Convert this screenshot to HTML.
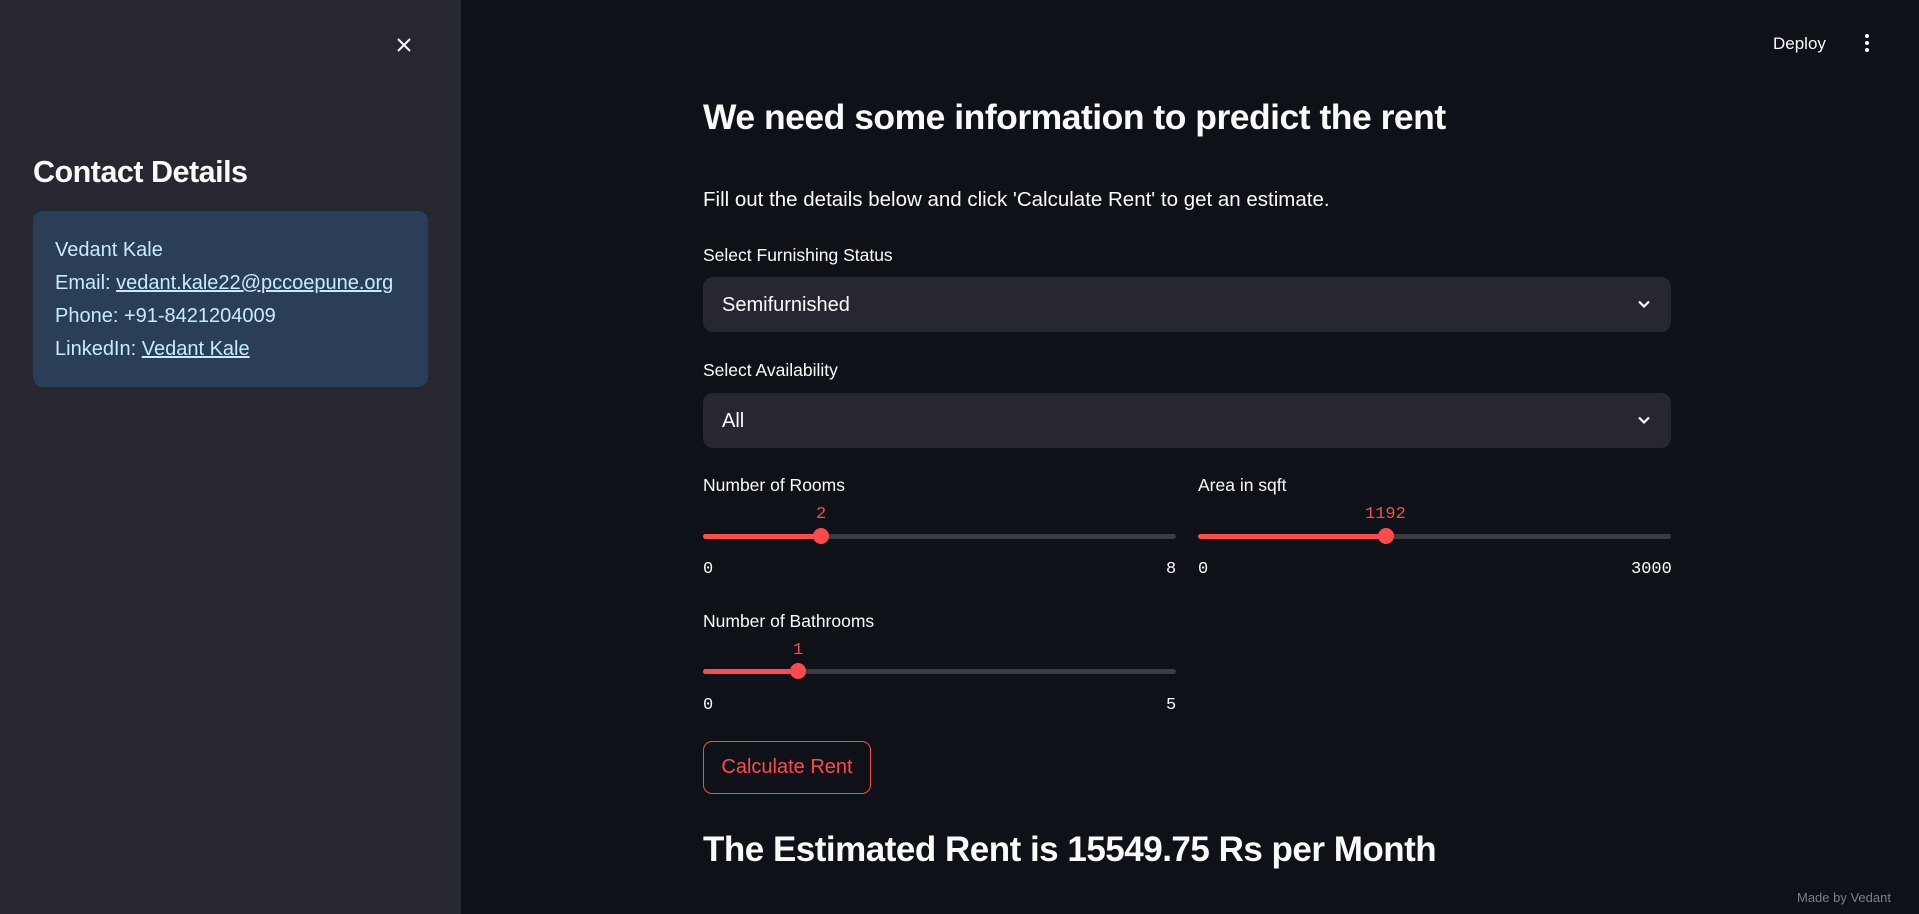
<!DOCTYPE html>
<html><head><meta charset="utf-8"><style>
*{box-sizing:border-box;margin:0;padding:0}
body{width:1919px;height:914px;background:#0e1117;font-family:"Liberation Sans",sans-serif;color:#fafafa;position:relative;overflow:hidden}
.a{position:absolute;white-space:nowrap}
.side{left:0;top:0;width:461px;height:914px;background:#262730}
.card{left:33px;top:211px;width:395px;height:176px;background:#2a3f57;border-radius:10px}
.ct{left:55px;font-size:20px;color:#c7ebff;line-height:1}
.ct u{text-decoration:underline}
.lbl{font-size:17.5px;color:#fafafa;line-height:1}
.sel{left:703px;width:968px;height:55px;background:#262730;border-radius:10px}
.sel span{position:absolute;left:19px;top:17px;font-size:20px}
.sel svg{position:absolute;right:20px;top:20px}
.track{height:5px;background:#3a3b44;border-radius:3px}
.fill{height:5px;background:#ff4b4b;border-radius:3px}
.th{width:16px;height:16px;border-radius:50%;background:#ff4b4b}
.mono{font-family:"Liberation Mono",monospace;font-size:17px;line-height:1}
.val{color:#ff4b4b}
</style></head><body>
<div class="a side"></div>
<svg class="a" style="left:396px;top:37px" width="16" height="16" viewBox="0 0 16 16"><path d="M2 2L14 14M14 2L2 14" stroke="#fafafa" stroke-width="2"/></svg>
<div class="a" style="left:33px;top:155px;font-size:30.5px;font-weight:bold;letter-spacing:-0.5px">Contact Details</div>
<div class="a card"></div>
<div class="a ct" style="top:240px">Vedant Kale</div>
<div class="a ct" style="top:273px">Email: <u>vedant.kale22@pccoepune.org</u></div>
<div class="a ct" style="top:306px">Phone: +91-8421204009</div>
<div class="a ct" style="top:339px">LinkedIn: <u>Vedant Kale</u></div>

<div class="a" style="left:1773px;top:34px;font-size:17px">Deploy</div>
<svg class="a" style="left:1863px;top:33px" width="8" height="20"><circle cx="4" cy="3" r="2" fill="#fafafa"/><circle cx="4" cy="10" r="2" fill="#fafafa"/><circle cx="4" cy="17" r="2" fill="#fafafa"/></svg>

<div class="a" style="left:703px;top:97px;font-size:35.5px;font-weight:bold;letter-spacing:-0.5px">We need some information to predict the rent</div>
<div class="a" style="left:703px;top:188px;font-size:20.5px">Fill out the details below and click 'Calculate Rent' to get an estimate.</div>

<div class="a lbl" style="left:703px;top:247px">Select Furnishing Status</div>
<div class="a sel" style="top:277px"><span>Semifurnished</span><svg width="14" height="14" viewBox="0 0 14 14"><path d="M2 4.5L7 9.5L12 4.5" stroke="#fafafa" stroke-width="2.2" fill="none"/></svg></div>
<div class="a lbl" style="left:703px;top:362px">Select Availability</div>
<div class="a sel" style="top:393px"><span>All</span><svg width="14" height="14" viewBox="0 0 14 14"><path d="M2 4.5L7 9.5L12 4.5" stroke="#fafafa" stroke-width="2.2" fill="none"/></svg></div>

<div class="a lbl" style="left:703px;top:477px">Number of Rooms</div>
<div class="a mono val" style="left:816px;top:506px">2</div>
<div class="a track" style="left:703px;top:534px;width:473px"></div>
<div class="a fill" style="left:703px;top:534px;width:118px"></div>
<div class="a th" style="left:813px;top:528px"></div>
<div class="a mono" style="left:703px;top:561px">0</div>
<div class="a mono" style="left:1166px;top:561px">8</div>

<div class="a lbl" style="left:1198px;top:477px">Area in sqft</div>
<div class="a mono val" style="left:1365px;top:506px">1192</div>
<div class="a track" style="left:1198px;top:534px;width:473px"></div>
<div class="a fill" style="left:1198px;top:534px;width:188px"></div>
<div class="a th" style="left:1378px;top:528px"></div>
<div class="a mono" style="left:1198px;top:561px">0</div>
<div class="a mono" style="left:1631px;top:561px">3000</div>

<div class="a lbl" style="left:703px;top:613px">Number of Bathrooms</div>
<div class="a mono val" style="left:793px;top:642px">1</div>
<div class="a track" style="left:703px;top:669px;width:473px"></div>
<div class="a fill" style="left:703px;top:669px;width:95px"></div>
<div class="a th" style="left:790px;top:663px"></div>
<div class="a mono" style="left:703px;top:697px">0</div>
<div class="a mono" style="left:1166px;top:697px">5</div>

<div class="a" style="left:703px;top:741px;width:168px;height:53px;border:1px solid #ff4b4b;border-radius:9px;color:#ff4b4b;font-size:20px;text-align:center;line-height:51px">Calculate Rent</div>

<div class="a" style="left:703px;top:830px;font-size:35px;font-weight:bold;letter-spacing:-0.5px">The Estimated Rent is 15549.75 Rs per Month</div>
<div class="a" style="left:1797px;top:890px;font-size:13px;color:#7d7f86">Made by Vedant</div>
</body></html>
